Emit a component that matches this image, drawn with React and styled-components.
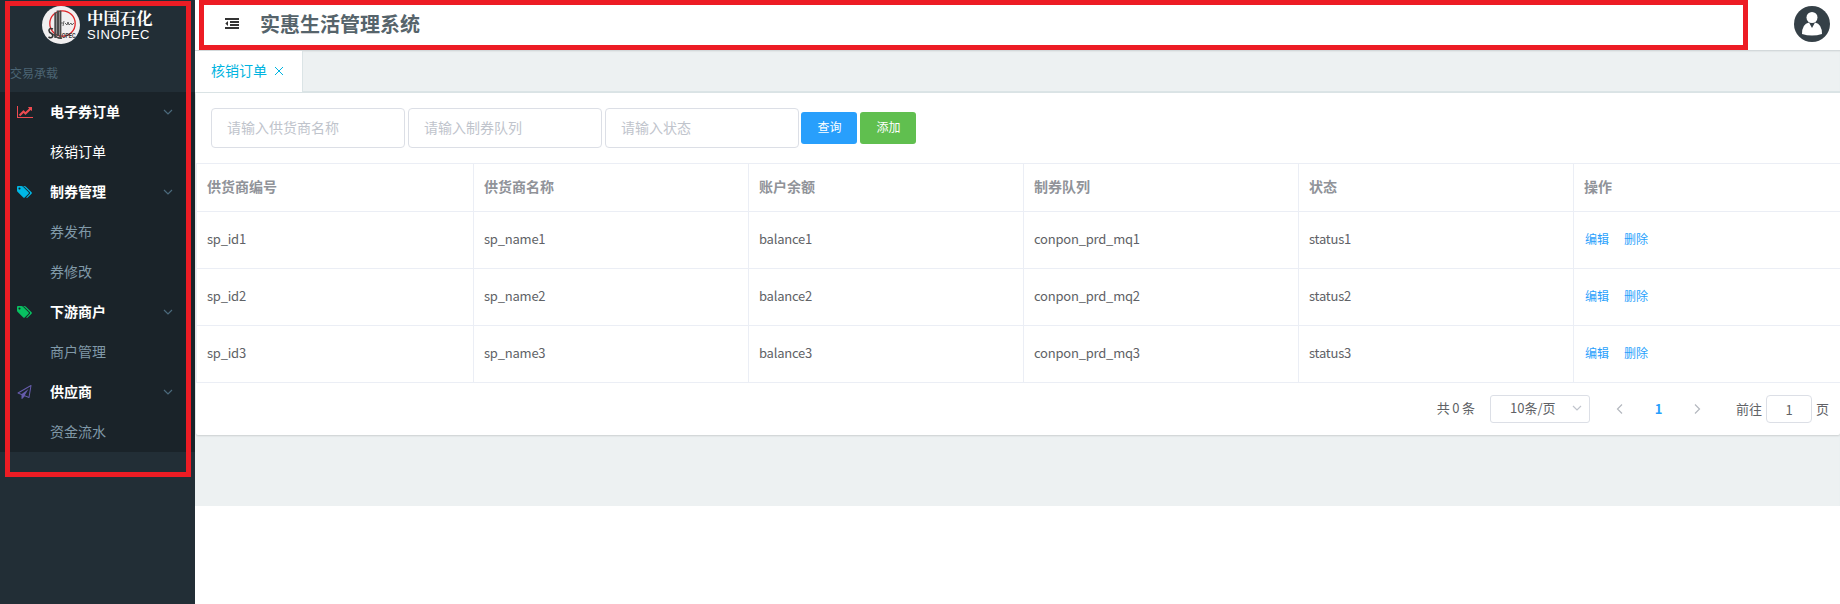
import React from 'react';
import styled, { createGlobalStyle } from 'styled-components';

const Global = createGlobalStyle`
  * { box-sizing: border-box; }
  body { margin: 0; background: #fff; color: #606266; font: 14px/20px "Noto Sans CJK SC", "Noto Sans", sans-serif; overflow: hidden; }
`;
const Page = styled.div`position: relative; display: flex; width: 1840px; height: 604px; overflow: hidden;`;
const Sidebar = styled.aside`width: 195px; flex: none; background: #222e36;`;
const Brand = styled.div`height: 50px; padding: 5px 0 0 42px; display: flex; gap: 7px;`;
const BrandText = styled.div`color: #fff; display: flex; flex-direction: column;`;
const BrandCn = styled.span`font: 700 16.4px/24px "Noto Serif CJK SC", "Noto Sans CJK SC", serif; height: 23px; white-space: nowrap;`;
const BrandEn = styled.span`font: 13px/14px "Liberation Sans", sans-serif; letter-spacing: .65px;`;
const MenuHeading = styled.div`height: 42px; padding: 13px 0 0 10px; font-size: 12px; line-height: 20px; color: #4b6473;`;
const Menu = styled.nav`background: #1a2329;`;
const MenuRow = styled.div`
  height: 40px; display: flex; align-items: center; padding: 0 22px 0 17px;
  color: ${p => (p.$strong || p.$active ? '#fff' : '#8099a8')};
  font-weight: ${p => (p.$strong ? 700 : 400)};
`;
const MenuIcon = styled.span`width: 33px; height: 16px; display: flex; align-items: center; color: ${p => p.$color};`;
const MenuLabel = styled.span`flex: 1; padding-bottom: 2px;`;
const Main = styled.main`flex: 1; min-width: 0;`;
const TopBar = styled.header`height: 50px; display: flex; align-items: center; padding: 0 10px 2px 30px;`;
const Title = styled.h1`flex: 1; margin: 0 0 0 21px; font-size: 20px; line-height: 28px; color: #56646b;`;
const Workspace = styled.section`height: 456px; background: #edf1f2; border-top: 1px solid #d3d9db; box-shadow: inset 0 1px 1px #e1e6e7;`;
const Tabs = styled.div`height: 42px; border-bottom: 2px solid #dbe4e6; display: flex;`;
const Tab = styled.div`
  width: 108px; height: 41px; background: #fff; border-right: 1px solid #dbe4e6; color: #00b4e0;
  display: flex; align-items: center; padding: 0 0 3px 16px; gap: 7px;
  svg { margin-top: 2px; }
`;
const Card = styled.div`height: 342px; margin-left: 1px; background: #fff; border-radius: 0 0 2px 2px; box-shadow: 0 1px 2px rgba(0,0,0,.14);`;
const Filters = styled.div`height: 70px; padding: 15px 0 0 15px; display: flex; align-items: flex-start;`;
const Field = styled.div`
  width: 194px; height: 40px; border: 1px solid #dcdfe6; border-radius: 4px; padding: 8px 15px;
  margin-right: 3px; color: #c0c4cc;
`;
const Buttons = styled.div`display: flex; gap: 3px; margin: 4px 0 0 -1px;`;
const Button = styled.button`
  width: 56px; height: 32px; padding: 0 0 2px 1px; border: 0; border-radius: 3px;
  background: ${p => p.$color}; color: #fff; font: 12px/28px "Noto Sans CJK SC", sans-serif;
`;
const Table = styled.div`border-top: 1px solid #ebeef5; border-left: 1px solid #ebeef5; overflow: hidden;`;
const TableRow = styled.div`
  display: grid; grid-template-columns: 277px repeat(4, 275px) 1fr; height: ${p => (p.$head ? 48 : 57)}px;
  border-bottom: 1px solid #ebeef5; font-size: ${p => (p.$head ? 14 : 13)}px;
  letter-spacing: ${p => (p.$head ? 0 : '-.22px')};
  font-weight: ${p => (p.$head ? 700 : 400)}; color: ${p => (p.$head ? '#909399' : '#606266')};
`;
const Cell = styled.div`
  display: flex; align-items: center; padding: 0 10px 3px; border-right: 1px solid #ebeef5;
  &:last-child { border-right: 0; }
`;
const Actions = styled.div`display: flex; gap: 15px; padding-left: 1px; font-size: 12px; letter-spacing: 0;`;
const Action = styled.a`color: #289ffc;`;
const Pager = styled.div`height: 52px; display: flex; align-items: flex-start; justify-content: flex-end; padding: 12px 11px 0 0; font-size: 13px; line-height: 28px;`;
const Total = styled.span`line-height: 26px; letter-spacing: -.15px;`;
const PageSize = styled.div`
  width: 100px; height: 28px; margin: 0 22px 0 15px; border: 1px solid #dcdfe6; border-radius: 3px;
  display: flex; align-items: center; justify-content: space-between; padding: 0 7px 2px 19px;
`;
const PageStep = styled.span`width: 16px; height: 27px; display: flex; align-items: center; justify-content: center; color: #b4b8bf;`;
const Current = styled.b`width: 61px; text-align: center; line-height: 27px; color: #289ffc;`;
const Jump = styled.div`display: flex; margin-left: 31px; line-height: 28px;`;
const JumpBox = styled.div`width: 46px; height: 28px; margin: 0 4px; border: 1px solid #dcdfe6; border-radius: 4px; text-align: center; line-height: 27px;`;
const Highlight = styled.div`
  position: absolute; border: 5px solid #ed1c24; pointer-events: none;
  left: ${p => p.$x}px; top: ${p => p.$y}px; width: ${p => p.$w}px; height: ${p => p.$h}px;
`;

const Chevron = ({ dir = 'down', size = 8, color = 'currentColor' }) => {
  const d = { down: 'M1 3L5 7L9 3', left: 'M7 .5L2.5 5L7 9.5', right: 'M3 .5L7.5 5L3 9.5' }[dir];
  return <svg width={size} height={size} viewBox="0 0 10 10" fill="none" stroke={color} strokeWidth="1.2"><path d={d} /></svg>;
};
const LineChart = () => (
  <svg width="16" height="14" viewBox="0 0 2048 1792" fill="currentColor">
    <path d="M2048 1536v128h-2048v-1536h128v1408h1920zM1920 288v435q0 21-19.5 29.5t-35.5-7.5l-121-121-633 633q-10 10-23 10t-23-10l-233-233-416 416-192-192 585-585q10-10 23-10t23 10l233 233 464-464-121-121q-16-16-7.5-35.5t29.5-19.5h435q14 0 23 9t9 23z" />
  </svg>
);
const Tags = () => (
  <svg width="15" height="14" viewBox="0 0 1920 1792" fill="currentColor">
    <path d="M448 448q0-53-37.5-90.5t-90.5-37.5-90.5 37.5-37.5 90.5 37.5 90.5 90.5 37.5 90.5-37.5 37.5-90.5zm1067 576q0 53-37 90l-491 492q-39 37-91 37-53 0-90-37l-715-716q-38-37-64.5-101t-26.5-117v-416q0-52 38-90t90-38h416q53 0 117 26.5t102 64.5l715 714q37 39 37 91zm384 0q0 53-37 90l-491 492q-39 37-91 37-36 0-59-14t-53-45l470-470q37-37 37-90 0-52-37-91l-715-714q-38-38-102-64.5t-117-26.5h224q53 0 117 26.5t102 64.5l715 714q37 39 37 91z" />
  </svg>
);
const Plane = () => (
  <svg width="15" height="14" viewBox="0 0 1792 1792" fill="currentColor">
    <path d="M1764 11q33 24 27 64l-256 1536q-5 29-32 45-14 8-31 8-11 0-24-5l-527-215-298 327q-18 21-47 21-14 0-23-4-19-7-30-23.5t-11-36.5v-452l-472-193q-37-14-40-55-3-39 32-59l1664-960q35-21 68 2zm-342 1499l221-1323-1434 827 336 137 863-639-478 797z" />
  </svg>
);
const Outdent = () => (
  <svg width="14" height="12" viewBox="0 0 14 12" fill="#333">
    <path d="M0 0H14V2H0ZM5 3H14V5H5ZM5 6H14V8H5ZM0 9H14V11H0ZM3 3V8L.3 5.5Z" />
  </svg>
);
const Emblem = () => (
  <svg width="38" height="39" viewBox="0 0 38 39">
    <circle cx="19" cy="20" r="19" fill="#f1eff0" />
    <circle cx="20.5" cy="18.5" r="12.7" fill="none" stroke="#df2528" strokeWidth="1.3" />
    <path d="M12.3 33V7.5H14.3V33ZM14.7 31V5.5H17V31ZM17.4 33V5.5H19.4V33Z" fill="#4b4b4b" />
    <path d="M11.5 29Q15 34 20 33" fill="none" stroke="#444" strokeWidth="1.5" />
    <path d="M19 18H21M22 16L21 21M23 18L25 20L26 17L27 20L29 18L30 20L32 18" fill="none" stroke="#444" strokeWidth=".8" />
    <path d="M11 24Q7 22.5 7 25.5Q7 27.5 9.5 28.5Q11.5 30 10.5 31.8Q9 33.5 6.500 32" fill="none" stroke="#333" strokeWidth="1.6" />
    <text transform="translate(19.800 33) scale(.72 1)" fontFamily="Liberation Sans, sans-serif" fontWeight="700" fontSize="6.800" fill="#333">OPEC</text>
  </svg>
);
const Avatar = () => (
  <svg width="36" height="36" viewBox="0 0 36 36">
    <circle cx="18" cy="18" r="18" fill="#354047" />
    <circle cx="18" cy="11.5" r="5.5" fill="#fff" />
    <path d="M8 28Q8 18 15 16.5L18 22L21 16.5Q28 18 28 28Q18 31 8 28Z" fill="#fff" />
  </svg>
);

const menu = [
  { label: '电子券订单', color: '#ef4b50', icon: <LineChart /> },
  { label: '核销订单', active: true },
  { label: '制券管理', color: '#00b7e5', icon: <Tags /> },
  { label: '券发布' },
  { label: '券修改' },
  { label: '下游商户', color: '#08c161', icon: <Tags /> },
  { label: '商户管理' },
  { label: '供应商', color: '#665cac', icon: <Plane /> },
  { label: '资金流水' },
];

export default function App() {
  return (
    <Page>
      <Global />
      <Sidebar>
        <Brand><Emblem /><BrandText><BrandCn>中国石化</BrandCn><BrandEn>SINOPEC</BrandEn></BrandText></Brand>
        <MenuHeading>交易承载</MenuHeading>
        <Menu>
          {menu.map(m => (
            <MenuRow key={m.label} $strong={!!m.icon} $active={m.active}>
              <MenuIcon $color={m.color}>{m.icon}</MenuIcon>
              <MenuLabel>{m.label}</MenuLabel>
              {m.icon && <Chevron color="#4b6a7c" size={10} />}
            </MenuRow>
          ))}
        </Menu>
      </Sidebar>
      <Main>
        <TopBar><Outdent /><Title>实惠生活管理系统</Title><Avatar /></TopBar>
        <Workspace>
          <Tabs>
            <Tab>核销订单
              <svg width="10" height="10" viewBox="0 0 10 10" stroke="currentColor" strokeWidth="1"><path d="M1 1L9 9M9 1L1 9" /></svg>
            </Tab>
          </Tabs>
          <Card>
            <Filters>
              <Field>请输入供货商名称</Field><Field>请输入制券队列</Field><Field>请输入状态</Field>
              <Buttons><Button $color="#289ffc">查询</Button><Button $color="#60bf4f">添加</Button></Buttons>
            </Filters>
            <Table>
              <TableRow $head>{['供货商编号', '供货商名称', '账户余额', '制券队列', '状态', '操作'].map(t => <Cell key={t}>{t}</Cell>)}</TableRow>
              {[1, 2, 3].map(n => (
                <TableRow key={n}>
                  {['sp_id', 'sp_name', 'balance', 'conpon_prd_mq', 'status'].map(t => <Cell key={t}>{t + n}</Cell>)}
                  <Cell><Actions><Action>编辑</Action><Action>删除</Action></Actions></Cell>
                </TableRow>
              ))}
            </Table>
            <Pager>
              <Total>共 0 条</Total>
              <PageSize>10条/页<Chevron size={10} color="#c0c4cc" /></PageSize>
              <PageStep><Chevron dir="left" size={10} /></PageStep>
              <Current>1</Current>
              <PageStep><Chevron dir="right" size={10} /></PageStep>
              <Jump>前往<JumpBox>1</JumpBox>页</Jump>
            </Pager>
          </Card>
        </Workspace>
      </Main>
      <Highlight $x={5} $y={1} $w={186} $h={476} />
      <Highlight $x={199} $y={0} $w={1549} $h={50} />
    </Page>
  );
}
